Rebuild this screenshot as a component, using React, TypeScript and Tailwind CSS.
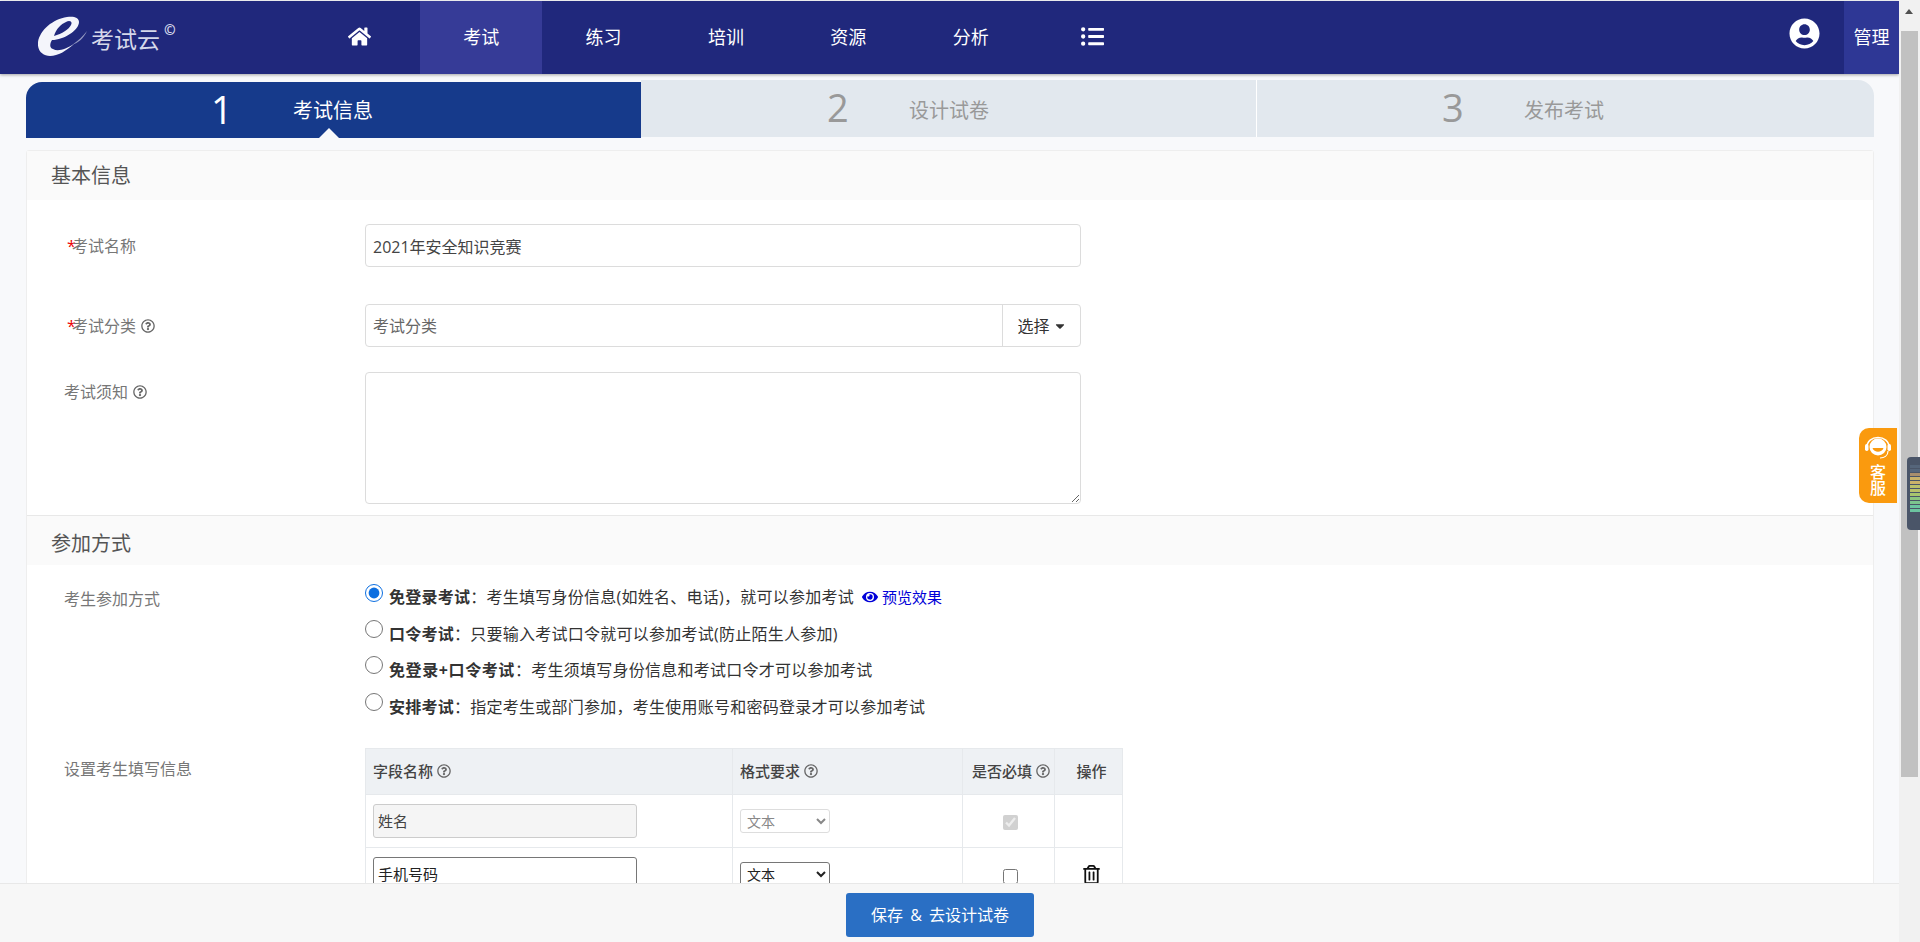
import { FaCaretDown, FaEye, FaHome, FaListUl, FaRegQuestionCircle, FaRegTrashAlt, FaUserCircle } from "react-icons/fa";

const navItems = ["考试", "练习", "培训", "资源", "分析"];

const fontStack = "font-['Open_Sans','Noto_Sans_CJK_SC',sans-serif]";

const meterColors = ["#55657a", "#55657a", "#a98f6d", "#c9b26a", "#c9b26a", "#b9c06a", "#b9c06a", "#a8c46e", "#8cc47e", "#7cc48e", "#6cc4a0", "#6cc4a0"];

function Help({ className = "" }: { className?: string }) {
   return <FaRegQuestionCircle className={`inline-block text-[14px] text-[#666] ${className}`} />;
}

function Logo() {
   return (
      <div className="flex w-[298px] shrink-0 items-center pl-[38px]">
         <svg width="50" height="41" viewBox="0 0 50 41" className="mb-[2px] shrink-0">
            <path
               fillRule="evenodd"
               fill="#f4f5fb"
               d="M29 1C15 3 2 14 0 26C-1 35 5 40 12 40C20 40 28 35 36 28C28 33 20 36 15 33C11 32 12 27 14 24C26 24 41 14 41 6C41 1 35 0 29 1ZM28 6C31 4 35 5 33 9C31 13 24 18 16 20C18 13 23 8 28 6Z"
            />
            <path d="M34 29C40 25 45 20 49 15C46 22 40 27 34 29Z" fill="#f4f5fb" opacity="0.55" />
         </svg>
         <span className="ml-[3px] mt-[4px] text-[23px] leading-none text-[#d5d8ea]">考试云</span>
         <span className="mb-[16px] ml-[4px] text-[14px] font-bold leading-none text-[#d5d8ea]">©</span>
      </div>
   );
}

function Header() {
   return (
      <header className="mt-px flex h-[73px] shrink-0 items-stretch bg-[#20287c] text-white shadow-[0_1px_3px_rgba(0,0,0,0.35)]">
         <Logo />
         <div className="flex w-[122px] items-center justify-center">
            <FaHome className="mb-[3px] text-[23px]" />
         </div>
         {navItems.map((item, i) => (
            <div
               key={item}
               className={`flex w-[122.4px] items-center justify-center text-[18px] ${i === 0 ? "bg-[#363b97]" : ""}`}
            >
               {item}
            </div>
         ))}
         <div className="flex w-[122px] items-center justify-center">
            <FaListUl className="mb-[3px] text-[23px]" />
         </div>
         <div className="flex-1" />
         <div className="mr-[24px] flex items-center">
            <FaUserCircle className="mb-[8px] text-[31px]" />
         </div>
         <div className="flex w-[55px] items-center justify-center bg-[#2e3795] text-[18px]">管理</div>
      </header>
   );
}

function Steps() {
   return (
      <div className="mt-[6px] flex h-[57px] shrink-0 items-start">
         <div className="relative mt-[2px] flex h-[56px] w-[615px] items-center rounded-tl-[16px] bg-[#163a8b] pl-[185px] text-white">
            <span className="mb-[3px] w-[82px] text-[38px] leading-none">1</span>
            <span className="mt-[1px] text-[20px]">考试信息</span>
            <span className="absolute bottom-0 left-[293px] h-0 w-0 border-x-[10px] border-b-[10px] border-x-transparent border-b-[#f8f9fb]" />
         </div>
         <div className="flex h-[57px] w-[616px] items-center border-r border-white bg-[#e2e8ee] pl-[186px] text-[#999]">
            <span className="mb-[4px] w-[82px] text-[38px] leading-none">2</span>
            <span className="mt-[4px] text-[20px]">设计试卷</span>
         </div>
         <div className="flex h-[57px] flex-1 items-center rounded-tr-[16px] bg-[#e2e8ee] pl-[185px] text-[#999]">
            <span className="mb-[4px] w-[82px] text-[38px] leading-none">3</span>
            <span className="mt-[4px] text-[20px]">发布考试</span>
         </div>
      </div>
   );
}

function SectionTitle({ children, className = "" }: { children: string; className?: string }) {
   return (
      <div className={`flex h-[49px] items-center bg-[#fafafa] pl-[24px] text-[20px] text-[#555] ${className}`}>{children}</div>
   );
}

function Form() {
   return (
      <>
         <SectionTitle>基本信息</SectionTitle>
         <div className="flex flex-col pb-[11px] pt-[24px] text-[16px] text-[#333]">
            <div className="flex items-center">
               <label className="w-[338px] pl-[40px] text-[#777]">
                  <span className="inline-block w-[5px] text-[#e00]">*</span>考试名称
               </label>
               <input
                  readOnly
                  defaultValue="2021年安全知识竞赛"
                  className="h-[43px] w-[716px] rounded-[4px] border border-[#dcdcdc] px-[7px] text-[16px] text-[#444] outline-none"
               />
            </div>
            <div className="mt-[37px] flex items-center">
               <label className="w-[338px] pl-[40px] text-[#777]">
                  <span className="inline-block w-[5px] text-[#e00]">*</span>考试分类 <Help className="ml-[1px] align-[-1px]" />
               </label>
               <div className="flex h-[43px] w-[716px] rounded-[4px] border border-[#dcdcdc]">
                  <div className="flex flex-1 items-center px-[7px] text-[#666]">考试分类</div>
                  <div className="flex w-[78px] items-center justify-center gap-[3px] border-l border-[#dcdcdc] pl-[1px] text-[#333]">
                     选择
                     <FaCaretDown className="text-[14px]" />
                  </div>
               </div>
            </div>
            <div className="mt-[25px] flex items-start">
               <label className="w-[338px] pl-[37px] pt-[8px] text-[#777]">
                  考试须知 <Help className="ml-[1px] align-[-1px]" />
               </label>
               <textarea
                  readOnly
                  className="block h-[132px] w-[716px] rounded-[4px] border border-[#dcdcdc] outline-none"
               />
            </div>
         </div>
         <div className="border-t border-[#e8e8e8]">
            <SectionTitle className="pt-[6px]">参加方式</SectionTitle>
         </div>
         <div className="flex pt-[16px] text-[16px] text-[#333]">
            <label className="w-[338px] pl-[37px] pt-[6px] text-[#777]">考生参加方式</label>
            <div className="flex flex-col">
               <div className="flex h-[36px] items-center">
                  <input type="radio" name="mode" defaultChecked className="mb-[12px] h-[18px] w-[18px] accent-[#0d6fe0]" />
                  <span className="mb-[4px] ml-[6px] tracking-[0.25px]"><b>免登录考试</b>：考生填写身份信息(如姓名、电话)，就可以参加考试</span>
                  <span className="mb-[4px] ml-[8px] flex items-center gap-[4px] text-[15px] text-[#0000d8]">
                     <FaEye className="text-[16px]" />
                     预览效果
                  </span>
               </div>
               <div className="flex h-[36px] items-center">
                  <input type="radio" name="mode" className="mb-[12px] h-[18px] w-[18px]" />
                  <span className="mb-[2px] ml-[6px] tracking-[0.25px]"><b>口令考试</b>：只要输入考试口令就可以参加考试(防止陌生人参加)</span>
               </div>
               <div className="flex h-[36px] items-center">
                  <input type="radio" name="mode" className="mb-[12px] h-[18px] w-[18px]" />
                  <span className="mb-[2px] ml-[6px] tracking-[0.25px]"><b className="tracking-[0.6px]">免登录+口令考试</b>：考生须填写身份信息和考试口令才可以参加考试</span>
               </div>
               <div className="flex h-[36px] items-center">
                  <input type="radio" name="mode" className="mb-[10px] h-[18px] w-[18px]" />
                  <span className="ml-[6px] tracking-[0.25px]"><b>安排考试</b>：指定考生或部门参加，考生使用账号和密码登录才可以参加考试</span>
               </div>
            </div>
         </div>
         <div className="mt-[23px] flex text-[15px]">
            <label className="w-[338px] pl-[37px] pt-[9px] text-[16px] text-[#777]">设置考生填写信息</label>
            <table className="w-[758px] table-fixed border-collapse text-[#444]">
               <thead>
                  <tr className="h-[46px] bg-[#eef1f4] text-left font-medium">
                     <th className="w-[367px] border border-[#e6e9ec] pl-[7px] font-medium">字段名称 <Help className="align-[-1px]" /></th>
                     <th className="w-[230px] border border-[#e6e9ec] pl-[7px] font-medium">格式要求 <Help className="align-[-1px]" /></th>
                     <th className="w-[92px] border border-[#e6e9ec] pl-[5px] text-center font-medium">是否必填 <Help className="align-[-1px]" /></th>
                     <th className="border border-[#e6e9ec] pl-[6px] text-center font-medium">操作</th>
                  </tr>
               </thead>
               <tbody>
                  <tr className="h-[53px]">
                     <td className="border border-[#e6e9ec] pl-[7px]">
                        <input disabled defaultValue="姓名" className="block h-[34px] w-[264px] rounded-[3px] border border-[#ccc] bg-[#f5f5f5] px-[4px] pb-[2px] text-[#444]" />
                     </td>
                     <td className="border border-[#e6e9ec] pl-[7px]">
                        <select disabled className="block h-[24px] w-[90px] rounded-[3px] border border-[#ddd] bg-white pl-[2px] text-[14px] text-[#888]">
                           <option>文本</option>
                        </select>
                     </td>
                     <td className="border border-[#e6e9ec] pl-[4px] text-center">
                        <input type="checkbox" disabled defaultChecked className="h-[15px] w-[15px] align-middle" />
                     </td>
                     <td className="border border-[#e6e9ec]" />
                  </tr>
                  <tr className="h-[53px]">
                     <td className="border border-[#e6e9ec] pl-[7px]">
                        <input readOnly defaultValue="手机号码" className="mb-[1px] block h-[34px] w-[264px] rounded-[3px] border border-[#767676] px-[4px] text-[#222]" />
                     </td>
                     <td className="border border-[#e6e9ec] pl-[7px]">
                        <select className="block h-[24px] w-[90px] rounded-[3px] border border-[#767676] bg-white pl-[2px] text-[14px] text-[#222]">
                           <option>文本</option>
                        </select>
                     </td>
                     <td className="border border-[#e6e9ec] pl-[4px] pt-[2px] text-center">
                        <input type="checkbox" className="h-[15px] w-[15px] align-middle" />
                     </td>
                     <td className="border border-[#e6e9ec] pl-[6px]">
                        <FaRegTrashAlt className="mx-auto text-[19px] text-[#111]" />
                     </td>
                  </tr>
               </tbody>
            </table>
         </div>
      </>
   );
}

function ServiceTab() {
   return (
      <div className="absolute left-[1859px] top-[428px] flex h-[75px] w-[38px] flex-col items-center rounded-l-[10px] bg-[#fa9a0e] pt-[5px] text-[16px] font-medium leading-[16px] text-white">
         <svg width="30" height="28" viewBox="0 0 30 28" fill="none" className="shrink-0">
            <path d="M4 15C3 1 27 1 26 15" stroke="#fff" strokeWidth="1.5" />
            <circle cx="15" cy="14" r="8.5" fill="#fff" />
            <path d="M9.5 15C11 20 19 20 20.5 15Z" fill="#fa9a0e" />
            <rect x="2" y="11" width="3.5" height="7" rx="1.7" fill="#fff" />
            <rect x="24.5" y="11" width="3.5" height="7" rx="1.7" fill="#fff" />
            <path d="M25 18C25 23 21 25 17 25" stroke="#fff" strokeWidth="1.2" />
         </svg>
         <span className="mt-[3px] w-[16px] break-all">客服</span>
      </div>
   );
}

function Scrollbar() {
   return (
      <div className="relative h-full w-[21px] shrink-0 bg-[#f1f1f1]">
         <div className="absolute left-[6px] top-[9px] h-0 w-0 border-x-[4px] border-b-[5px] border-x-transparent border-b-[#505050]" />
         <div className="absolute left-[2px] top-[31px] h-[746px] w-[17px] bg-[#c1c1c1]" />
         <div className="absolute left-[8px] top-[457px] flex h-[73px] w-[13px] flex-col gap-[1px] rounded-l-[4px] bg-[#4a5568] py-[8px] pl-[3px]">
            {meterColors.map((c, i) => (
               <span key={i} className="h-[3px] w-[10px]" style={{ backgroundColor: c }} />
            ))}
         </div>
      </div>
   );
}

export default function App() {
   return (
      <div className={`relative flex h-[942px] w-full overflow-hidden bg-[#f8f9fb] ${fontStack}`}>
         <div className="flex w-[1899px] shrink-0 flex-col">
            <Header />
            <main className="flex flex-col pl-[26px] pr-[25px]">
               <Steps />
               <section className="mt-[13px] rounded-t-[3px] border border-[#eeeeee] bg-white">
                  <Form />
               </section>
            </main>
         </div>
         <Scrollbar />
         <ServiceTab />
         <div className="absolute bottom-0 left-0 flex h-[59px] w-[1899px] items-center border-t border-[#e8e8e8] bg-[#f7f7f7] pl-[846px] pt-[3px]">
            <button className="h-[44px] w-[188px] rounded-[3px] bg-[#2a6fc4] text-[16px] text-white [word-spacing:3px]">
               保存 &amp; 去设计试卷
            </button>
         </div>
      </div>
   );
}
